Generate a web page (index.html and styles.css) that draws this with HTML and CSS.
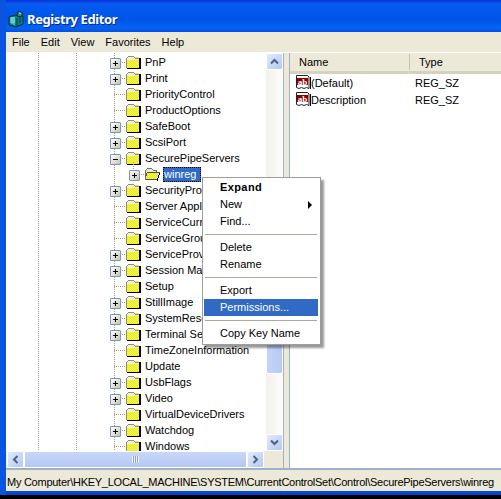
FILE: index.html
```html
<!DOCTYPE html>
<html lang="en">
<head>
<meta charset="utf-8">
<title>Registry Editor</title>
<link rel="stylesheet" href="styles.css">
</head>
<body>
<svg class="defs" width="0" height="0" aria-hidden="true">
  <defs>
    <pattern id="dither" width="2" height="2" patternUnits="userSpaceOnUse">
      <rect width="2" height="2" fill="#ffff00"/>
      <rect width="1" height="1" fill="#e0e070"/>
      <rect x="1" y="1" width="1" height="1" fill="#e0e070"/>
    </pattern>
    <symbol id="folder" viewBox="0 0 16 14">
      <g shape-rendering="crispEdges">
        <rect x="2" y="2" width="12" height="11" fill="url(#dither)"/>
        <path d="M3 1h6v1H3zM2 2h1v1H2zM9 2h1v1H9zM10 3h4v1h-4zM1 3h1v10H1z" fill="#8c8c80"/>
        <path d="M3 2h6v1H3zM2 3h8v1H2zM2 4h12v1H2z" fill="#f4f4e8" opacity=".8"/>
        <path d="M14 3h2v11H2v-1h12z" fill="#000"/>
      </g>
    </symbol>
    <symbol id="openfolder" viewBox="0 0 16 14">
      <g shape-rendering="crispEdges">
        <path d="M2 3h1V2h5v1h4v2H2z" fill="#e8e8dc"/>
        <path d="M3 1h5v1H3zM2 2h1v1H2zM8 2h1v1H8zM9 3h4v2h-1V4H9zM1 3h1v10H1z" fill="#70705c"/>
        <path d="M3 6h12l-2 6H2z" fill="url(#dither)"/>
        <path d="M3 5h13v1H3zM2 6h1v3H2zM2 12h12v1H2z" fill="#50503c"/>
        <path d="M15 6h1v2h-1zM14 8h1v3h-1zM13 11h1v3h-1z" fill="#000"/>
      </g>
    </symbol>
    <symbol id="ab" viewBox="0 0 16 15">
      <path d="M1.500 .5h11l1.500 1.500v11.500l-2.500-1-2.500 1-2.500-1-2.500 1-2.500-1z" fill="#fff" stroke="#222"/>
      <path d="M15.500 2v12" stroke="#000"/>
      <rect x="2" y="3" width="11" height="7" fill="#8c0000"/>
      <text x="7.500" y="9.500" class="abglyph">ab</text>
    </symbol>
  </defs>
</svg>
<div class="window">
  <header class="titlebar">
    <svg class="appicon" width="18" height="18" viewBox="0 0 18 18" aria-hidden="true">
      <path d="M1 7 7 5l8 1v8l-7 3-7-2z" fill="#0d7f7f" stroke="#0c2b30"/>
      <path d="M2 8h5M2 10h5M2 12h5M4 7v7M6 7v8" stroke="#7fe8e0" stroke-width="1"/>
      <path d="M9 8v8M12 7v6" stroke="#063a44"/>
      <path d="M10 1l5 2-2 4-4-1z" fill="#1d8f8a" stroke="#0c2b30"/>
      <path d="M11 3l2 1" stroke="#8ff"/>
    </svg>
    <span class="title">Registry Editor</span>
  </header>
  <nav class="menubar">
    <span>File</span><span>Edit</span><span>View</span><span>Favorites</span><span>Help</span>
  </nav>
  <main class="panes">
    <section class="treepane">
      <div class="treerow-wrap">
        <div class="tree">
          <div class="guides"></div>
          <ul class="nodes">
            <li class="node"><i class="exp plus"></i><svg class="fi"><use href="#folder"/></svg><span class="lbl">PnP</span></li>
            <li class="node"><i class="exp plus"></i><svg class="fi"><use href="#folder"/></svg><span class="lbl">Print</span></li>
            <li class="node"><i class="exp"></i><svg class="fi"><use href="#folder"/></svg><span class="lbl">PriorityControl</span></li>
            <li class="node"><i class="exp"></i><svg class="fi"><use href="#folder"/></svg><span class="lbl">ProductOptions</span></li>
            <li class="node"><i class="exp plus"></i><svg class="fi"><use href="#folder"/></svg><span class="lbl">SafeBoot</span></li>
            <li class="node"><i class="exp plus"></i><svg class="fi"><use href="#folder"/></svg><span class="lbl">ScsiPort</span></li>
            <li class="node"><i class="exp minus"></i><svg class="fi"><use href="#folder"/></svg><span class="lbl">SecurePipeServers</span></li>
            <li class="node child"><i class="exp plus"></i><svg class="fi"><use href="#openfolder"/></svg><span class="lbl sel">winreg</span></li>
            <li class="node"><i class="exp plus"></i><svg class="fi"><use href="#folder"/></svg><span class="lbl">SecurityProviders</span></li>
            <li class="node"><i class="exp"></i><svg class="fi"><use href="#folder"/></svg><span class="lbl">Server Applications</span></li>
            <li class="node"><i class="exp"></i><svg class="fi"><use href="#folder"/></svg><span class="lbl">ServiceCurrent</span></li>
            <li class="node"><i class="exp"></i><svg class="fi"><use href="#folder"/></svg><span class="lbl">ServiceGroupOrder</span></li>
            <li class="node"><i class="exp plus"></i><svg class="fi"><use href="#folder"/></svg><span class="lbl">ServiceProvider</span></li>
            <li class="node"><i class="exp plus"></i><svg class="fi"><use href="#folder"/></svg><span class="lbl">Session Manager</span></li>
            <li class="node"><i class="exp"></i><svg class="fi"><use href="#folder"/></svg><span class="lbl">Setup</span></li>
            <li class="node"><i class="exp plus"></i><svg class="fi"><use href="#folder"/></svg><span class="lbl">StillImage</span></li>
            <li class="node"><i class="exp plus"></i><svg class="fi"><use href="#folder"/></svg><span class="lbl">SystemResources</span></li>
            <li class="node"><i class="exp plus"></i><svg class="fi"><use href="#folder"/></svg><span class="lbl">Terminal Server</span></li>
            <li class="node"><i class="exp"></i><svg class="fi"><use href="#folder"/></svg><span class="lbl">TimeZoneInformation</span></li>
            <li class="node"><i class="exp"></i><svg class="fi"><use href="#folder"/></svg><span class="lbl">Update</span></li>
            <li class="node"><i class="exp plus"></i><svg class="fi"><use href="#folder"/></svg><span class="lbl">UsbFlags</span></li>
            <li class="node"><i class="exp plus"></i><svg class="fi"><use href="#folder"/></svg><span class="lbl">Video</span></li>
            <li class="node"><i class="exp"></i><svg class="fi"><use href="#folder"/></svg><span class="lbl">VirtualDeviceDrivers</span></li>
            <li class="node"><i class="exp plus"></i><svg class="fi"><use href="#folder"/></svg><span class="lbl">Watchdog</span></li>
            <li class="node"><i class="exp"></i><svg class="fi"><use href="#folder"/></svg><span class="lbl">Windows</span></li>
          </ul>
        </div>
        <div class="vscroll">
          <button class="sbtn"><svg width="9" height="7" viewBox="0 0 9 7"><path d="M1 5.500 4.500 2 8 5.500" class="chev"/></svg></button>
          <div class="vtrack"><div class="vthumb"></div></div>
          <button class="sbtn"><svg width="9" height="7" viewBox="0 0 9 7"><path d="M1 1.500 4.500 5 8 1.500" class="chev"/></svg></button>
        </div>
      </div>
      <div class="hscroll">
        <button class="sbtn"><svg width="7" height="9" viewBox="0 0 7 9"><path d="M5.500 1 2 4.500 5.500 8" class="chev"/></svg></button>
        <div class="hthumb"><span class="grip"></span></div>
        <button class="sbtn"><svg width="7" height="9" viewBox="0 0 7 9"><path d="M1.500 1 5 4.500 1.500 8" class="chev"/></svg></button>
        <div class="corner"></div>
      </div>
    </section>
    <section class="listpane">
      <div class="listhead">
        <span class="col-name">Name</span><span class="col-type">Type</span>
      </div>
      <div class="listrow"><svg class="abicon"><use href="#ab"/></svg><span class="col-val">(Default)</span><span class="col-t">REG_SZ</span></div>
      <div class="listrow"><svg class="abicon"><use href="#ab"/></svg><span class="col-val">Description</span><span class="col-t">REG_SZ</span></div>
    </section>
  </main>
  <footer class="status">My Computer\HKEY_LOCAL_MACHINE\SYSTEM\CurrentControlSet\Control\SecurePipeServers\winreg</footer>
  <div class="bottomedge"></div>
  <div class="contextmenu">
    <div class="mi strong">Expand</div>
    <div class="mi arrow">New</div>
    <div class="mi">Find...</div>
    <div class="sep"></div>
    <div class="mi">Delete</div>
    <div class="mi">Rename</div>
    <div class="sep"></div>
    <div class="mi">Export</div>
    <div class="mi hot">Permissions...</div>
    <div class="sep"></div>
    <div class="mi">Copy Key Name</div>
  </div>
</div>
</body>
</html>
```
FILE: styles.css
```css
* { box-sizing: border-box; }
html, body { margin: 0; padding: 0; }
body { width: 501px; height: 499px; overflow: hidden; background: #000; font: 11px/16px "Liberation Sans", Arial, sans-serif; color: #000; }
.defs { position: absolute; }
.abglyph { font: bold 9px "Liberation Serif", serif; fill: #fff; text-anchor: middle; }
.window { position: relative; width: 501px; height: 495px; background: #ece9d8; border-left: 6px solid #0a55e0; display: flex; flex-direction: column; overflow: hidden; }
.titlebar { margin-left: -6px; height: 32px; padding: 6px 0 0 8px; display: flex; align-items: center; gap: 1px; background: linear-gradient(#0831d9 0, #0a5cf0 4px, #0058ee 9px, #0055e5 20px, #0463f5 28px, #0350e0 32px); }
.appicon { flex: none; }
.title { font: bold 13px "Noto Sans", sans-serif; letter-spacing: -.4px; color: #fff; text-shadow: 1px 1px 0 #0a2a8a; }
.menubar { height: 20px; display: flex; align-items: center; padding-left: .5px; background: #ece9d8; }
.menubar span { padding: 0 5.500px; }
.panes { height: 416px; display: flex; gap: 5px; background: #ece9d8; border-top: 1px solid #fff; }
.treepane { width: 278px; display: flex; flex-direction: column; flex: none; border-right: 1px solid #9db2c8; }
.treerow-wrap { height: 398px; display: flex; }
.tree { position: relative; flex: none; width: 260px; overflow: hidden; background: #fff; }
.guides { position: absolute; inset: 0; background: repeating-linear-gradient(#a09c88 0 1px, transparent 1px 2px) 32px 0 / 1px 100% no-repeat, repeating-linear-gradient(#a09c88 0 1px, transparent 1px 2px) 70px 0 / 1px 100% no-repeat, repeating-linear-gradient(#a09c88 0 1px, transparent 1px 2px) 108px 0 / 1px 100% no-repeat; }
.nodes { position: relative; list-style: none; margin: 0; padding: 1px 0 0 104px; }
.node { height: 16px; display: flex; align-items: center; white-space: nowrap; }
.node.child { padding-left: 19px; }
.exp { flex: none; width: 15px; height: 16px; position: relative; background: repeating-linear-gradient(90deg, #a09c88 0 1px, transparent 1px 2px) 4px 8px / 11px 1px no-repeat; }
.plus::before, .minus::before { content: ""; position: absolute; left: 0; top: 4px; width: 9px; height: 9px; border: 1px solid #7a98b4; border-radius: 1px; }
.plus::before { background: linear-gradient(#000, #000) center / 5px 1px no-repeat, linear-gradient(#000, #000) center / 1px 5px no-repeat, linear-gradient(135deg, #fff, #c8c4b4); }
.minus::before { background: linear-gradient(#000, #000) center / 5px 1px no-repeat, linear-gradient(135deg, #fff, #c8c4b4); }
.child .exp::after { content: ""; position: absolute; left: 4px; top: -4px; width: 1px; height: 8px; background: repeating-linear-gradient(#a09c88 0 1px, transparent 1px 2px); }
.fi { flex: none; width: 16px; height: 14px; margin-right: 3px; }
.lbl { padding: 0 1px; line-height: 14px; }
.lbl.sel { background: #316ac5; color: #fff; outline: 1px dotted #000; outline-offset: -1px; padding: 0 1px; margin-left: 0; width: 38px; height: 15px; }
.vscroll { flex: none; width: 17px; display: flex; flex-direction: column; background: linear-gradient(90deg, #f3f1ec, #fdfdfa); }
.vtrack { flex: 1; display: flex; align-items: flex-end; }
.vthumb { width: 100%; height: 170px; margin-bottom: 60px; background: linear-gradient(90deg, #c4d4f8, #b8caf4); border: 1px solid #fff; border-radius: 2px; }
.sbtn { flex: none; width: 17px; height: 17px; padding: 0; display: flex; align-items: center; justify-content: center; background: linear-gradient(135deg, #e2ebfd, #b4c8f4); border: 1px solid #fff; border-radius: 2px; }
.chev { fill: none; stroke: #4d6185; stroke-width: 2; }
.hscroll { height: 17px; display: flex; padding-left: 1px; background: #f3f1ec; }
.hthumb { flex: none; width: 223px; display: flex; align-items: center; justify-content: center; background: linear-gradient(#c8d6f8, #b4c8f4); border: 1px solid #fff; border-radius: 2px; }
.grip { width: 7px; height: 7px; background: repeating-linear-gradient(90deg, #f0f4ff 0 1px, #8ca4dc 1px 2px); }
.corner { flex: 1; background: #ece9d8; }
.listpane { flex: 1; background: #fff; border-left: 1px solid #9db2c8; }
.listhead { height: 21px; display: flex; align-items: center; background: #ece9d8; border-bottom: 3px solid #d6d2c0; }
.col-name { width: 120px; padding-left: 9px; border-right: 1px solid #c8c4b0; }
.col-type { padding-left: 9px; }
.listrow { height: 17px; display: flex; align-items: center; }
.abicon { flex: none; width: 16px; height: 15px; margin-left: 5px; }
.col-val { width: 104px; }
.status { height: 23px; padding: 3px 0 0 1px; display: flex; align-items: center; white-space: nowrap; letter-spacing: -.26px; background: #ece9d8; border-top: 2px solid #9db2c8; }
.bottomedge { height: 4px; background: linear-gradient(#0050dc, #0a3cc0); margin-left: -6px; }
.contextmenu { position: absolute; left: 196px; top: 177px; width: 119px; padding: 1px 2px 2px 1px; background: #fff; border: 1px solid #9d9d9d; box-shadow: 3px 3px 2px rgba(0,0,0,.4); }
.mi { height: 17px; padding-left: 16px; line-height: 17px; position: relative; }
.mi.strong { font-weight: bold; letter-spacing: .4px; }
.mi.hot { background: #316ac5; color: #fff; }
.mi.arrow::after { content: ""; position: absolute; right: 6px; top: 5px; border-left: 4px solid #000; border-top: 4px solid transparent; border-bottom: 4px solid transparent; }
.sep { height: 1px; margin: 4px 1px; background: #aca899; }
```
